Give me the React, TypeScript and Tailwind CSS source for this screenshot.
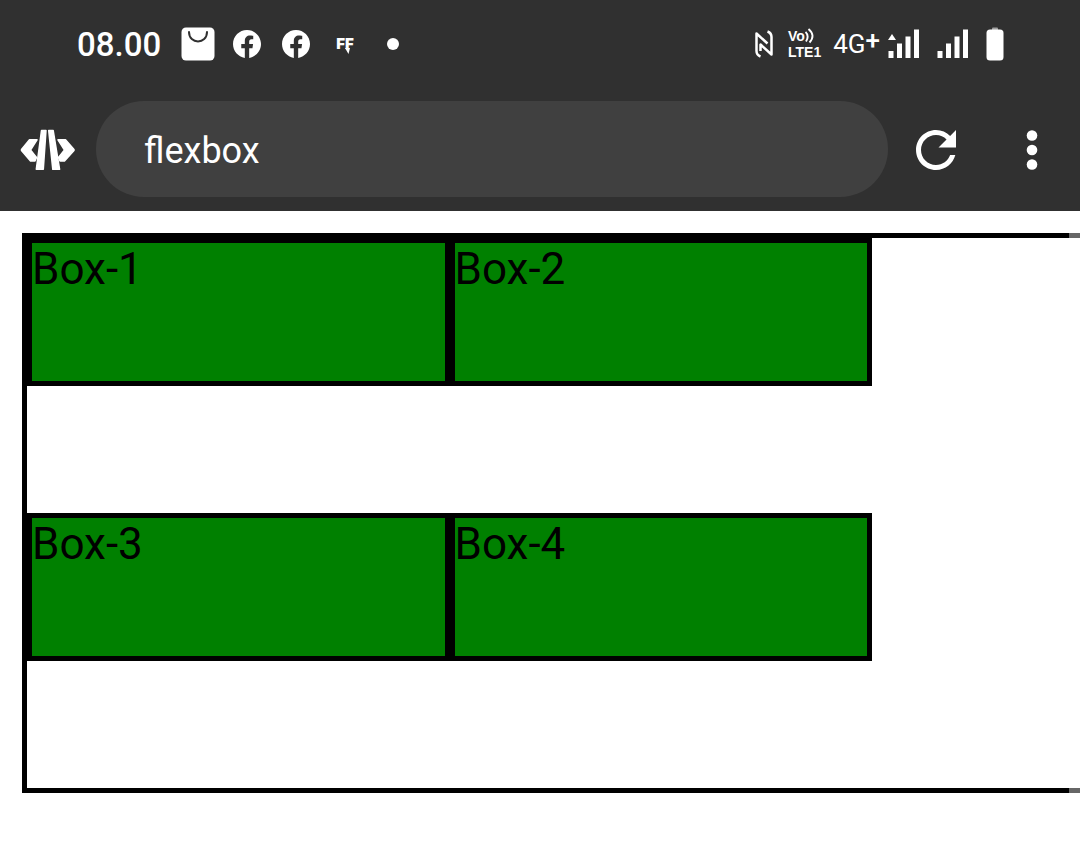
import { useState } from "react";

function BagIcon() {
  return (
    <svg viewBox="0 0 34 34" className="h-[34px] w-[34px]" aria-hidden="true">
      <rect x="0.5" y="0.5" width="33" height="33" rx="4.5" fill="#fff" />
      <path d="M8 5c0 12.5 18 12.5 18 0" fill="none" stroke="#303030" strokeWidth="2" strokeLinecap="round" />
    </svg>
  );
}

function FacebookIcon() {
  return (
    <svg viewBox="0 0 24 24" className="h-7 w-7" fill="#fff" aria-hidden="true">
      <path d="M24 12.073c0-6.627-5.373-12-12-12s-12 5.373-12 12c0 5.99 4.388 10.954 10.125 11.854v-8.385H7.078v-3.47h3.047V9.43c0-3.007 1.792-4.669 4.533-4.669 1.312 0 2.686.235 2.686.235v2.953H15.83c-1.491 0-1.956.925-1.956 1.874v2.25h3.328l-.532 3.47h-2.796v8.385C19.612 23.027 24 18.062 24 12.073z" />
    </svg>
  );
}

function NfcIcon() {
  return (
    <svg viewBox="0 0 18 28" className="h-7 w-[18px]" fill="none" stroke="#fff" strokeWidth="2.5" strokeLinejoin="round" aria-hidden="true">
      <path d="M5.500 26.500Q1.500 25 1.500 21V3.500L12.500 13.500" />
      <path d="M12.500 1.500Q16.500 3 16.500 7V24.500L5.500 14.500V21" />
    </svg>
  );
}

function VoWaves() {
  return (
    <svg viewBox="0 0 9 16" className="h-4 w-[9px] shrink-0" fill="none" stroke="#fff" strokeWidth="1.9" aria-hidden="true">
      <path d="M0.500 4Q4.500 8 1 13.500" />
      <path d="M3.500 1Q11 7.500 4.500 14.500" />
    </svg>
  );
}

function SignalIcon({ data = false }: { data?: boolean }) {
  return (
    <svg viewBox="0 0 32 30" className="h-[30px] w-8" fill="#fff" aria-hidden="true">
      {data && <path d="M0 11l4-6 4 6z" />}
      <rect x="0.500" y="22" width="5" height="7" />
      <rect x="9" y="14.500" width="5" height="14.500" />
      <rect x="17.500" y="7.500" width="5" height="21.500" />
      <rect x="26" y="0.500" width="5" height="28.500" />
    </svg>
  );
}

function BatteryIcon() {
  return (
    <svg viewBox="0 0 18 34" className="h-[34px] w-[18px]" aria-hidden="true">
      <rect x="6" y="0.500" width="6" height="4" rx="1" fill="#a0a0a0" />
      <rect x="0.500" y="2.500" width="17" height="31" rx="3.500" fill="#fff" />
    </svg>
  );
}

function CodeLogo() {
  return (
    <svg viewBox="0 0 56 42" className="h-[42px] w-14" fill="#fff" stroke="#fff" strokeWidth="1.500" strokeLinejoin="round" aria-hidden="true">
      <path d="M9.500 10.800H17L10.500 21L16.500 28.500L15 32H10.500L1.500 21.500V20.500z" />
      <path d="M45.500 10.800H38L44.500 21L38.500 28.500L40 32H44.500L54 21.500V20.500z" />
      <path d="M21.500 1.500H26L23.300 40.300H16.300z" />
      <path d="M28.700 1.500H33.200L39.600 40.300H32.800z" />
    </svg>
  );
}

function StatusBar() {
  return (
    <div className="flex h-[87px] items-center justify-between pr-[76px] pl-[77px]">
      <div className="flex items-center">
        <time className="pt-[2px] text-[33px] leading-10 font-medium">08.00</time>
        <div className="ml-5 flex items-center gap-[18px]">
          <BagIcon />
          <div className="flex gap-[21px]">
            <FacebookIcon />
            <FacebookIcon />
          </div>
        </div>
        <div className="ml-[26px] flex items-center">
          <span className="relative font-['Inter',sans-serif] text-[15px] leading-5 font-black">
            FF
            <svg viewBox="0 0 5 6" className="absolute right-1 bottom-0 h-1.5 w-[5px]" fill="#fff" aria-hidden="true">
              <path d="M0 0h5L3.500 6z" />
            </svg>
          </span>
          <span className="ml-[33px] h-3 w-3 rounded-full bg-white" />
        </div>
      </div>
      <div className="flex items-center">
        <NfcIcon />
        <div className="ml-[15px] flex flex-col font-['Liberation_Sans',sans-serif] text-[14px] leading-4 font-bold">
          <span className="flex h-4 items-center">
            Vo
            <VoWaves />
          </span>
          <span className="flex h-4">
            LTE<span>1</span>
          </span>
        </div>
        <span className="ml-3 flex text-[26px] leading-8">
          4G<span className="-mt-1 font-medium">+</span>
        </span>
        <div className="ml-2 flex items-center gap-[17px]">
          <SignalIcon data />
          <SignalIcon />
          <BatteryIcon />
        </div>
      </div>
    </div>
  );
}

function Toolbar() {
  const [address, setAddress] = useState("flexbox");
  return (
    <div className="flex h-[124px] items-center">
      <button type="button" aria-label="Home" className="flex w-24 shrink-0 justify-center pt-[2px]">
        <CodeLogo />
      </button>
      <input
        type="text"
        aria-label="Address"
        value={address}
        onChange={(e) => setAddress(e.target.value)}
        className="h-24 min-w-0 flex-1 rounded-full bg-[#404040] px-12 pt-1 text-[36px] text-white outline-none"
      />
      <button type="button" aria-label="Reload" className="flex w-24 shrink-0 justify-center pt-[2px]">
        <svg viewBox="0 0 24 24" className="h-[60px] w-[60px]" fill="#fff" aria-hidden="true">
          <path d="M17.65 6.35C16.2 4.9 14.21 4 12 4c-4.42 0-7.990 3.580-7.990 8s3.570 8 7.990 8c3.730 0 6.840-2.550 7.730-6h-2.080c-.820 2.330-3.040 4-5.650 4-3.310 0-6-2.690-6-6s2.690-6 6-6c1.660 0 3.140.690 4.220 1.780L13 11h7V4l-2.350 2.350z" />
        </svg>
      </button>
      <button type="button" aria-label="Menu" className="flex w-24 shrink-0 justify-center pt-[2px]">
        <svg viewBox="0 0 60 60" className="h-[60px] w-[60px]" fill="#fff" aria-hidden="true">
          <circle cx="30" cy="15.500" r="5.300" />
          <circle cx="30" cy="30" r="5.300" />
          <circle cx="30" cy="44.500" r="5.300" />
        </svg>
      </button>
    </div>
  );
}

const boxes = ["Box-1", "Box-2", "Box-3", "Box-4"];

export default function App() {
  return (
    <div className="min-h-screen bg-white font-['Roboto',sans-serif]">
      <header className="bg-[#303030] text-white">
        <StatusBar />
        <Toolbar />
      </header>
      <main className="relative pt-[22px] pb-[70px] pl-[22px]">
        <div className="border-y-[5px] border-l-[5px] border-black">
          <div className="grid w-[80.25%] grid-cols-2 gap-y-[127px] pb-[127px]">
            {boxes.map((name) => (
              <div
                key={name}
                className="h-[148px] border-[5px] border-black bg-[#008000] text-[44px] leading-[52px] text-black"
              >
                {name}
              </div>
            ))}
          </div>
        </div>
        <div className="absolute inset-y-0 right-0 w-[11px] bg-white/40" />
      </main>
    </div>
  );
}
